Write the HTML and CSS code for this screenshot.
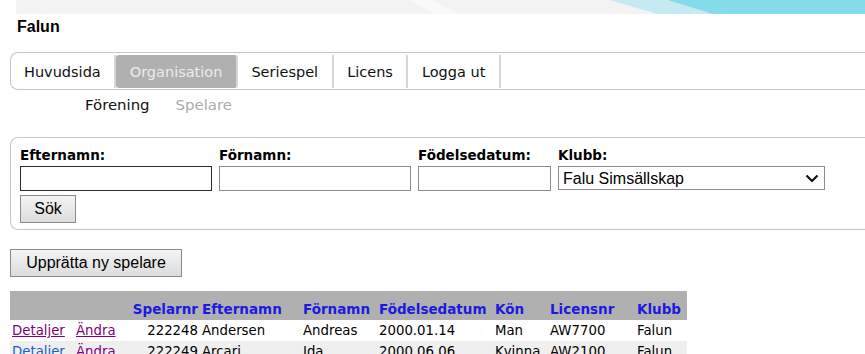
FILE: index.html
```html
<!DOCTYPE html>
<html lang="sv">
<head>
    <meta charset="UTF-8">
    <title>Spelare - Falun</title>
    <link rel="stylesheet" href="styles.css">
</head>
<body>
    <!-- sidhuvud -->
    <div class="banner">
        <svg width="849" height="14" viewBox="0 0 849 14" preserveAspectRatio="none">
            <rect x="0" y="0" width="849" height="14" fill="#f3f3f3"/>
            <polygon points="394,0 416,0 442,14 420,14" fill="#f9f9f9"/>
            <polygon points="594,0 651,0 697,14 641,14" fill="#c6e9f2"/>
            <polygon points="651,0 849,0 849,14 697,14" fill="#84dbea"/>
        </svg>
    </div>
    <h1 class="club-name">Falun</h1>

    <!-- huvudmeny -->
    <div class="menu">
        <a class="menu-item" href="#">Huvudsida</a>
        <a class="menu-item active" href="#">Organisation</a>
        <a class="menu-item" href="#">Seriespel</a>
        <a class="menu-item" href="#">Licens</a>
        <a class="menu-item" href="#">Logga ut</a>
    </div>
    <div class="submenu">
        <a class="sub-item" href="#">Förening</a>
        <span class="sub-item current">Spelare</span>
    </div>

    <!-- sökformulär -->
    <form class="search-box" onsubmit="return false;">
        <div class="fields">
            <div class="field">
                <label for="efternamn">Efternamn:</label>
                <input type="text" id="efternamn" class="txt wide focused">
            </div>
            <div class="field">
                <label for="fornamn">Förnamn:</label>
                <input type="text" id="fornamn" class="txt wide">
            </div>
            <div class="field">
                <label for="fodd">Födelsedatum:</label>
                <input type="text" id="fodd" class="txt date">
            </div>
            <div class="field">
                <label for="klubb">Klubb:</label>
                <div class="select-wrap">
                    <select id="klubb" class="club-select">
                        <option>Falu Simsällskap</option>
                    </select>
                    <svg class="chevron" width="14" height="9" viewBox="0 0 14 9">
                        <path d="M1.5 1.5 L7 7 L12.5 1.5" fill="none" stroke="#111" stroke-width="2.2"/>
                    </svg>
                </div>
            </div>
        </div>
        <button class="btn search-btn">Sök</button>
    </form>

    <button class="btn new-btn">Upprätta ny spelare</button>

    <!-- spelarlista -->
    <table class="players">
        <thead>
            <tr>
                <th class="c-det"></th>
                <th class="c-andra"></th>
                <th class="c-nr num">Spelarnr</th>
                <th class="c-en">Efternamn</th>
                <th class="c-fn">Förnamn</th>
                <th class="c-fd">Födelsedatum</th>
                <th class="c-kon">Kön</th>
                <th class="c-lic">Licensnr</th>
                <th class="c-klubb">Klubb</th>
            </tr>
        </thead>
        <tbody>
            <tr>
                <td><a class="visited" href="#">Detaljer</a></td>
                <td><a class="visited" href="#">Ändra</a></td>
                <td class="num">222248</td>
                <td>Andersen</td>
                <td>Andreas</td>
                <td>2000.01.14</td>
                <td>Man</td>
                <td>AW7700</td>
                <td>Falun</td>
            </tr>
            <tr class="alt">
                <td><a href="#">Detaljer</a></td>
                <td><a class="visited" href="#">Ändra</a></td>
                <td class="num">222249</td>
                <td>Arcari</td>
                <td>Ida</td>
                <td>2000.06.06</td>
                <td>Kvinna</td>
                <td>AW2100</td>
                <td>Falun</td>
            </tr>
        </tbody>
    </table>
</body>
</html>
```

FILE: styles.css
```css
body {
    margin: 0;
    padding: 0 0 0 10px;
    font-family: "DejaVu Sans", Verdana, sans-serif;
    color: #000;
    background: #fff;
    overflow: hidden;
}
.banner {
    margin-left: 6px;
    height: 14px;
    overflow: hidden;
}
.banner svg {
    display: block;
}
.club-name {
    font-family: "Liberation Sans", Arial, sans-serif;
    font-size: 16px;
    font-weight: bold;
    line-height: 18px;
    margin: 4px 0 0 7px;
}

/* meny */
.menu {
    margin-top: 16px;
    display: flex;
    height: 33px;
    padding: 2px 0 1px 0;
    border: 1px solid #c6c6c6;
    border-right: none;
    border-radius: 8px 0 0 8px;
}
.menu-item {
    display: flex;
    align-items: center;
    padding: 0 13.5px;
    font-size: 14.5px;
    color: #111;
    text-decoration: none;
    border-right: 2px solid #d6d6d6;
}
.menu-item:first-child {
    padding-left: 13px;
}
.menu-item.active {
    background: #b0b0b0;
    color: #ececec;
    border-radius: 3px;
}
.submenu {
    display: flex;
    gap: 26px;
    padding: 5px 0 0 75px;
    height: 20px;
    line-height: 20px;
    font-size: 14.9px;
}
.sub-item {
    color: #111;
    text-decoration: none;
}
.sub-item.current {
    color: #ababab;
}

/* sökformulär */
.search-box {
    margin: 22px 0 0 0;
    padding: 9px 0 6px 9px;
    border: 1px solid #c6c6c6;
    border-right: none;
    border-radius: 8px 0 0 8px;
}
.fields {
    display: flex;
    gap: 7px;
}
.field {
    display: flex;
    flex-direction: column;
}
.field label {
    font-weight: bold;
    font-size: 13.5px;
    line-height: 17px;
    margin-bottom: 2px;
}
.txt {
    box-sizing: border-box;
    height: 25px;
    border: 1px solid #8c8c8c;
    padding: 2px 4px;
    margin: 0;
    font-family: "Liberation Sans", Arial, sans-serif;
    font-size: 16px;
}
.txt.focused {
    border-color: #2b2b2b;
}
.wide {
    width: 192px;
}
.date {
    width: 133px;
}
.select-wrap {
    position: relative;
    width: 267px;
}
.club-select {
    appearance: none;
    -webkit-appearance: none;
    box-sizing: border-box;
    width: 267px;
    height: 24px;
    margin: 0;
    padding: 0 4px;
    border: 1px solid #8c8c8c;
    border-radius: 0;
    background: #fff;
    color: #000;
    font-family: "Liberation Sans", Arial, sans-serif;
    font-size: 16px;
}
.chevron {
    position: absolute;
    right: 6px;
    top: 8px;
    pointer-events: none;
}

/* knappar */
.btn {
    display: block;
    box-sizing: border-box;
    height: 28px;
    margin: 0;
    padding: 0 6px;
    border: 1px solid #8a8a8a;
    border-radius: 0;
    background: linear-gradient(#f4f4f4, #dcdcdc);
    font-family: "Liberation Sans", Arial, sans-serif;
    font-size: 16px;
    color: #000;
}
.search-btn {
    margin-top: 4px;
    width: 56px;
}
.new-btn {
    margin-top: 19px;
    width: 172px;
}

/* spelartabell */
.players {
    margin-top: 14px;
    border-collapse: collapse;
    table-layout: fixed;
    width: 677px;
    font-size: 13.3px;
}
.players th {
    box-sizing: border-box;
    height: 29px;
    padding: 0 2px;
    vertical-align: bottom;
    text-align: left;
    line-height: 21px;
    font-size: 13.5px;
    color: #1a1ae0;
    background: #b0b0b0;
    white-space: nowrap;
}
.players td {
    padding: 0 2px;
    line-height: 21px;
    white-space: nowrap;
    overflow: hidden;
}
.players .num {
    text-align: right;
}
.players tr.alt td {
    background: #efefef;
}
.players a {
    color: #1a5fc8;
}
.players a.visited {
    color: #800080;
}
.c-det { width: 64px; }
.c-andra { width: 50px; }
.c-nr { width: 76px; }
.c-en { width: 101px; }
.c-fn { width: 76px; }
.c-fd { width: 116px; }
.c-kon { width: 55px; }
.c-lic { width: 87px; }
.c-klubb { width: 52px; }
```
